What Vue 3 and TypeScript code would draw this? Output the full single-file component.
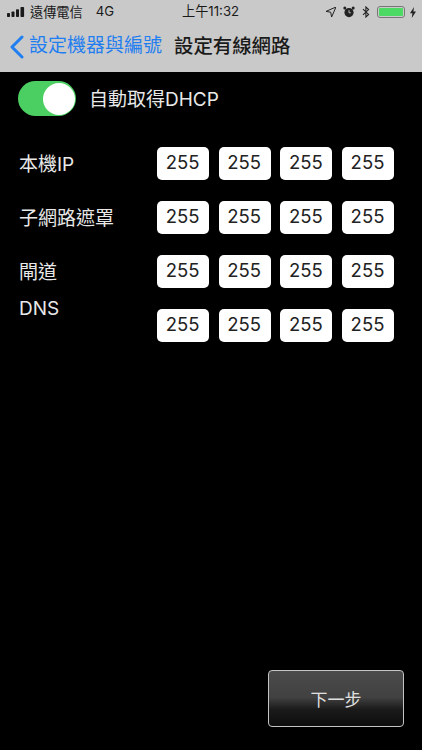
<script setup lang="ts">
interface Row { label: string; values: string[]; dns?: boolean }
const v = ['255', '255', '255', '255']
const rows: Row[] = [
  { label: '本機IP', values: v },
  { label: '子網路遮罩', values: v },
  { label: '閘道', values: v },
  { label: 'DNS', values: v, dns: true },
]
</script>

<template>
  <div class="page">
    <header class="top">
      <div class="status">
        <div class="st-left">
          <svg class="signal" width="18" height="10" viewBox="0 0 18 10">
            <rect x="0" y="6" width="3" height="4" rx="0.8" />
            <rect x="4.5" y="4.5" width="3" height="5.5" rx="0.8" />
            <rect x="9" y="2.3" width="3" height="7.7" rx="0.8" />
            <rect x="13.5" y="0" width="3.6" height="10" rx="0.8" />
          </svg>
          <span class="carrier">遠傳電信</span>
          <span class="net">4G</span>
        </div>
        <span class="clock">上午11:32</span>
        <div class="st-right">
          <svg width="10" height="10" viewBox="0 0 10 10"><path d="M10 0 L0 4.4 L4.7 5.2 L5.6 10 Z" fill="none" stroke="#222" stroke-width="1" stroke-linejoin="round" /></svg>
          <svg width="12" height="12" viewBox="0 0 12 12">
            <circle cx="6" cy="6.6" r="4.6" fill="#222" />
            <path d="M6 4.2 V6.8 H7.8" fill="none" stroke="#c9c9c9" stroke-width="0.9" />
            <circle cx="1.8" cy="1.9" r="1.5" fill="#222" />
            <circle cx="10.2" cy="1.9" r="1.5" fill="#222" />
          </svg>
          <svg width="8" height="12" viewBox="0 0 8 12"><path d="M1 3.2 L6.6 8.4 L3.9 11 V1 L6.6 3.6 L1 8.8" fill="none" stroke="#222" stroke-width="1.1" /></svg>
          <div class="battery"><div class="level"></div></div>
          <svg width="6" height="11" viewBox="0 0 6 11"><path d="M4 0 L0 6.2 H2.4 L1.8 11 L6 4.6 H3.4 Z" fill="#222" /></svg>
        </div>
      </div>
      <nav class="nav">
        <svg class="chev" width="15" height="24" viewBox="0 0 15 24"><path d="M13 2 L3 12 L13 22" fill="none" stroke="#1f7ef0" stroke-width="3" stroke-linecap="round" stroke-linejoin="round" /></svg>
        <span class="back">設定機器與編號</span>
        <span class="title">設定有線網路</span>
      </nav>
    </header>

    <main class="main">
      <div class="dhcp">
        <div class="switch"><div class="knob"></div></div>
        <span class="dhcp-label">自動取得DHCP</span>
      </div>

      <div class="form">
        <div v-for="row in rows" :key="row.label" class="row" :class="{ dns: row.dns }">
          <span class="label">{{ row.label }}</span>
          <div class="cells">
            <div v-for="(n, i) in row.values" :key="i" class="cell">{{ n }}</div>
          </div>
        </div>
      </div>

      <button class="next" type="button">下一步</button>
    </main>
  </div>
</template>

<style>
html, body { margin: 0; background: #000; }
</style>

<style scoped>
.page {
  width: 422px;
  height: 750px;
  display: flex;
  flex-direction: column;
  background: #000;
  overflow: hidden;
  font-family: Inter, "Noto Sans CJK TC", sans-serif;
}
.top {
  height: 72px;
  flex: none;
  background: #c9c9c9;
  color: #1a1a1a;
  box-sizing: border-box;
}
.status {
  height: 24px;
  display: flex;
  align-items: center;
  justify-content: space-between;
  padding: 0 6px 0 7px;
  font-size: 13.2px;
  position: relative;
}
.carrier, .net { position: relative; top: -1px; }
.st-left { display: flex; align-items: center; }
.signal { fill: #1a1a1a; }
.carrier { margin-left: 5px; }
.net { margin-left: 13px; }
.clock { position: absolute; left: 182px; top: 2px; line-height: 18px; }
.st-right { display: flex; align-items: center; gap: 7px; }
.battery {
  width: 28px;
  height: 12px;
  box-sizing: border-box;
  border: 1px solid #777;
  border-radius: 3px;
  padding: 1px;
  margin-left: 0;
  margin-right: -2px;
}
.level { width: 100%; height: 100%; background: #4cd964; border-radius: 1px; }
.nav {
  height: 48px;
  box-sizing: border-box;
  padding: 0 0 3px 9px;
  display: flex;
  align-items: center;
  font-size: 19px;
}
.chev { flex: none; }
.back { color: #1f7ef0; margin-left: 5px; line-height: 24px; position: relative; top: -1px; }
.title { margin-left: 12px; font-weight: 500; font-size: 19.4px; line-height: 24px; position: relative; top: -1px; }
.main {
  flex: 1;
  display: flex;
  flex-direction: column;
  color: #e8e8e8;
  font-size: 19px;
}
.dhcp {
  margin-top: 9px;
  padding-left: 18px;
  display: flex;
  align-items: center;
  gap: 13px;
}
.switch {
  width: 58px;
  height: 35px;
  border-radius: 18px;
  background: #4ccf62;
  display: flex;
  align-items: center;
  justify-content: flex-end;
  padding-right: 1px;
  box-sizing: border-box;
}
.knob { width: 32px; height: 32px; border-radius: 50%; background: #fff; }
.dhcp-label { color: #e8e8e8; margin-top: -3px; }
.form {
  margin-top: 31px;
  display: flex;
  flex-direction: column;
  gap: 21px;
}
.row {
  display: flex;
  align-items: center;
  justify-content: space-between;
  padding: 0 28px 0 19px;
  height: 33px;
}
.label { margin-top: -3px; }
.row.dns { align-items: flex-start; }
.row.dns .label { margin-top: -17px; line-height: 33px; }
.cells { display: flex; gap: 9.67px; }
.cell {
  width: 52px;
  height: 33px;
  box-sizing: border-box;
  padding: 0 1px 4px 0;
  background: #fff;
  border-radius: 5px;
  color: #222;
  display: flex;
  align-items: center;
  justify-content: center;
  font-size: 18.5px;
}
.next {
  margin: auto 18px 23px auto;
  width: 136px;
  height: 57px;
  box-sizing: border-box;
  border: 1px solid #c4c4c4;
  border-radius: 4px;
  background: linear-gradient(#4b4b4b 0%, #414141 48%, #1a1a1a 70%, #0d0d0d 100%);
  color: #e0e0e0;
  font: inherit;
  font-size: 17px;
  padding: 0;
}
</style>
